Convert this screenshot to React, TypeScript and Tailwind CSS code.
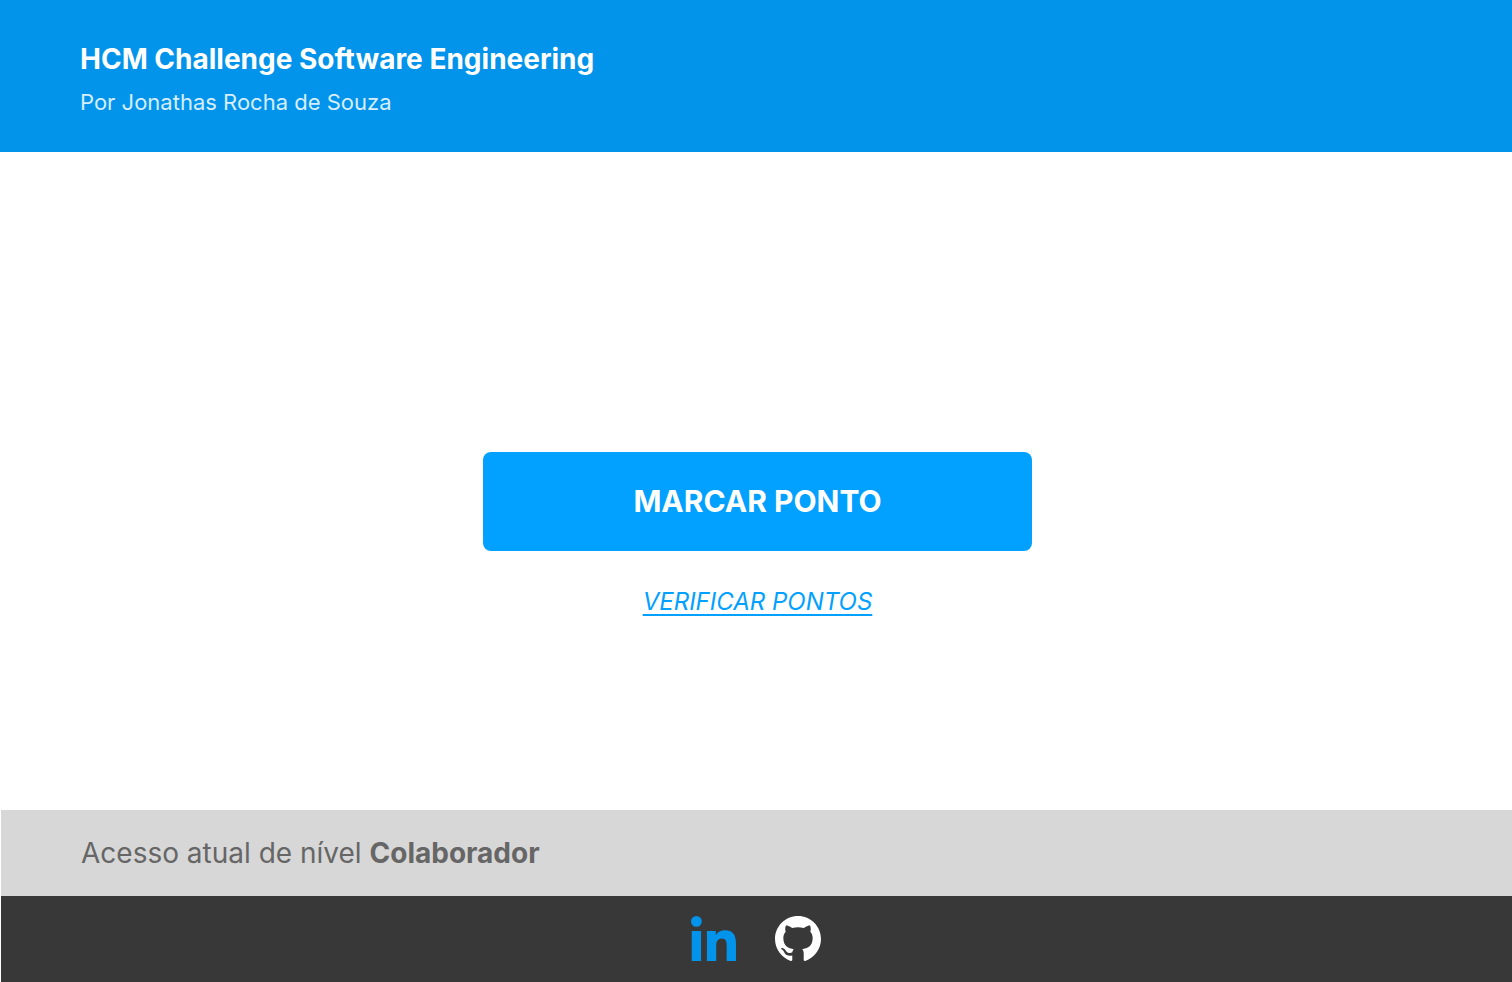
function LinkedInLink() {
  return (
    <a href="#linkedin" aria-label="LinkedIn" className="block">
      <svg viewBox="0 0 448 448" className="size-[45px]" fill="#0293eb" aria-hidden="true">
        <path d="M100.28 448H7.4V148.9h92.88zM53.79 108.1C24.09 108.1 0 83.5 0 53.8a53.79 53.79 0 0 1 107.58 0c0 29.7-24.1 54.3-53.79 54.3zM447.9 448h-92.68V302.4c0-34.7-.7-79.2-48.29-79.2-48.29 0-55.69 37.7-55.69 76.7V448h-92.78V148.9h89.08v40.8h1.3c12.4-23.5 42.69-48.3 87.88-48.3 94 0 111.28 61.9 111.28 142.3V448z" />
      </svg>
    </a>
  );
}

function GitHubLink() {
  return (
    <a href="#github" aria-label="GitHub" className="block">
      <svg viewBox="3.6 5.1 120.8 117.8" className="h-[45px] w-[46px]" fill="#ffffff" aria-hidden="true">
        <path
          fillRule="evenodd"
          clipRule="evenodd"
          d="M64 5.103c-33.347 0-60.388 27.035-60.388 60.388 0 26.682 17.303 49.317 41.297 57.303 3.017.56 4.125-1.31 4.125-2.905 0-1.44-.056-6.197-.082-11.243-16.8 3.653-20.345-7.125-20.345-7.125-2.747-6.98-6.705-8.836-6.705-8.836-5.48-3.748.413-3.67.413-3.67 6.063.425 9.257 6.223 9.257 6.223 5.386 9.23 14.127 6.562 17.573 5.02.542-3.903 2.107-6.568 3.834-8.076-13.413-1.525-27.514-6.704-27.514-29.843 0-6.593 2.36-11.98 6.223-16.21-.628-1.52-2.695-7.662.584-15.98 0 0 5.07-1.623 16.61 6.19C53.7 35 58.867 34.327 64 34.304c5.13.023 10.3.694 15.127 2.033 11.526-7.813 16.59-6.19 16.59-6.19 3.287 8.317 1.22 14.46.593 15.98 3.872 4.23 6.215 9.617 6.215 16.21 0 23.194-14.127 28.3-27.574 29.796 2.167 1.874 4.097 5.55 4.097 11.183 0 8.08-.07 14.583-.07 16.572 0 1.607 1.088 3.49 4.148 2.897 23.98-7.994 41.263-30.622 41.263-57.294C124.388 32.14 97.35 5.104 64 5.104z"
        />
      </svg>
    </a>
  );
}

export default function App() {
  return (
    <div className="flex min-h-screen flex-col bg-white font-['Inter',sans-serif]">
      <header className="bg-[#0293eb] px-20 pt-10 pb-8">
        <h1 className="text-[28px] leading-[38px] font-bold text-white">HCM Challenge Software Engineering</h1>
        <p className="mt-1.5 text-[22px] leading-9 text-[#d6eefd]">Por Jonathas Rocha de Souza</p>
      </header>

      <main className="flex flex-1 flex-col items-center pt-[300px] pl-[3px]">
        <button type="button" className="h-[99px] w-[549px] rounded-lg bg-[#02a0ff] text-[30px] font-bold text-white">
          MARCAR PONTO
        </button>
        <a
          href="#pontos"
          className="mt-[35px] text-2xl text-[#02a0ff] italic underline decoration-2 underline-offset-4"
        >
          VERIFICAR PONTOS
        </a>
      </main>

      <section className="ml-px bg-[#d7d7d7] px-20 py-6">
        <p className="text-[28px] leading-[38px] text-[#666666]">
          Acesso atual de nível <strong className="font-bold">Colaborador</strong>
        </p>
      </section>
      <footer className="ml-px flex h-[86px] items-center justify-center gap-[39px] bg-[#383838] pr-px pb-0.5">
        <LinkedInLink />
        <GitHubLink />
      </footer>
    </div>
  );
}
